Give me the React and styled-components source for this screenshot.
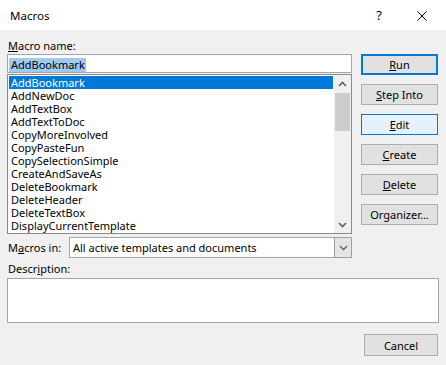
import React from "react";
import styled, { createGlobalStyle, css } from "styled-components";

const Global = createGlobalStyle`
  html, body { margin: 0; padding: 0; background: #f0f0f0; }
  body {
    font-family: "Noto Sans", "Open Sans", sans-serif;
    font-size: 11px;
    color: #000;
  }
  * { box-sizing: border-box; }
`;

const Window = styled.div`
  width: 446px;
  height: 365px;
  display: flex;
  flex-direction: column;
  background: #f0f0f0;
  overflow: hidden;
`;

const TitleBar = styled.div`
  height: 30px;
  flex: none;
  background: #fff;
  display: flex;
  align-items: center;
  padding-left: 10px;
`;

const Title = styled.div`
  flex: 1;
  font-size: 11.5px;
  line-height: 15px;
  padding-top: 1px;
`;

const HelpGlyph = styled.div`
  width: 14px;
  margin-right: 31px;
  font-size: 13px;
  line-height: 15px;
  text-align: center;
`;

const CloseGlyph = styled.svg`
  width: 10px;
  height: 10px;
  margin-right: 19px;
  margin-top: 1px;
`;

const Body = styled.div`
  flex: 1;
  display: flex;
  flex-direction: column;
  padding: 8px 7px 0 7px;
`;

const TopSection = styled.div`
  display: flex;
  gap: 9px;
`;

const LeftColumn = styled.div`
  width: 345px;
  display: flex;
  flex-direction: column;
`;

const FieldLabel = styled.div`
  line-height: 15px;
  height: 15px;
  padding-left: 1px;
  margin-top: ${(p) => p.$top || 0}px;
`;

const Key = styled.span`
  text-decoration: underline;
  text-underline-offset: 1px;
  text-decoration-thickness: 1px;
`;

const NameInput = styled.div`
  margin-top: 1px;
  height: 19px;
  border: 1px solid #a5a5a5;
  background: #fff;
  padding: 2px 0 0 1px;
`;

const SelectedText = styled.span`
  display: inline-block;
  background: #9fc9ee;
  line-height: 14px;
  height: 14px;
  padding: 0 1px 0 2px;
`;

const ListBox = styled.div`
  margin-top: 1px;
  height: 160px;
  border: 1px solid #8a8a8a;
  background: #fff;
  display: flex;
`;

const Items = styled.div`
  flex: 1;
  padding: 1px 1px 0 1px;
`;

const Item = styled.div`
  height: 13px;
  line-height: 13px;
  padding-left: 2px;
  white-space: nowrap;
  ${(p) =>
    p.$selected &&
    css`
      background: #0078d7;
      color: #fff;
    `}
`;

const ScrollBar = styled.div`
  width: 17px;
  background: #f0f0f0;
  display: flex;
  flex-direction: column;
`;

const ScrollArrow = styled.div`
  height: 17px;
  display: flex;
  align-items: center;
  justify-content: center;
`;

const ScrollTrack = styled.div`
  flex: 1;
  padding: 1px 1px;
`;

const ScrollThumb = styled.div`
  height: 38px;
  background: #cdcdcd;
`;

const ButtonColumn = styled.div`
  display: flex;
  flex-direction: column;
  gap: 9px;
  padding-top: 16px;
  width: 77px;
`;

const Button = styled.div`
  height: ${(p) => p.$h || 21}px;
  width: ${(p) => p.$w || 77}px;
  background: #e1e1e1;
  border: 1px solid #adadad;
  display: flex;
  align-items: center;
  justify-content: center;
  line-height: 15px;
  ${(p) =>
    p.$default &&
    css`
      border: 2px solid #0078d7;
    `}
  ${(p) =>
    p.$hover &&
    css`
      background: #e5f1fb;
      border-color: #0078d7;
    `}
`;

const MacrosInRow = styled.div`
  margin-top: 3px;
  height: 21px;
  display: flex;
  align-items: center;
`;

const RowLabel = styled.div`
  width: 62px;
  padding-left: 1px;
  line-height: 15px;
`;

const Combo = styled.div`
  width: 283px;
  height: 21px;
  border: 1px solid #a5a5a5;
  background: #fff;
  display: flex;
`;

const ComboText = styled.div`
  flex: 1;
  padding-left: 3px;
  line-height: 19px;
`;

const ComboButton = styled.div`
  width: 18px;
  margin: -1px -1px -1px 0;
  background: #e5e5e5;
  border: 1px solid #a0a0a0;
  display: flex;
  align-items: center;
  justify-content: center;
`;

const DescriptionBox = styled.div`
  margin-top: 2px;
  width: 432px;
  height: 45px;
  border: 1px solid #a5a5a5;
  background: #fff;
`;

const Footer = styled.div`
  display: flex;
  justify-content: flex-end;
  padding: 11px 1px 0 0;
`;

const Chevron = ({ up, color = "#606060" }) => (
  <svg width="9" height="6" viewBox="0 0 9 6">
    <path
      d={up ? "M1 5 L4.5 1.5 L8 5" : "M1 1 L4.5 4.5 L8 1"}
      fill="none"
      stroke={color}
      strokeWidth="1.6"
    />
  </svg>
);

const macros = [
  "AddBookmark",
  "AddNewDoc",
  "AddTextBox",
  "AddTextToDoc",
  "CopyMoreInvolved",
  "CopyPasteFun",
  "CopySelectionSimple",
  "CreateAndSaveAs",
  "DeleteBookmark",
  "DeleteHeader",
  "DeleteTextBox",
  "DisplayCurrentTemplate",
];

export default function App() {
  return (
    <Window>
      <Global />
      <TitleBar>
        <Title>Macros</Title>
        <HelpGlyph>?</HelpGlyph>
        <CloseGlyph viewBox="0 0 10 10">
          <path d="M0.5 0.5 L9.5 9.5 M9.5 0.5 L0.5 9.5" stroke="#000" strokeWidth="1" />
        </CloseGlyph>
      </TitleBar>
      <Body>
        <TopSection>
          <LeftColumn>
            <FieldLabel>
              <Key>M</Key>acro name:
            </FieldLabel>
            <NameInput>
              <SelectedText>AddBookmark</SelectedText>
            </NameInput>
            <ListBox>
              <Items>
                {macros.map((m, i) => (
                  <Item key={m} $selected={i === 0}>
                    {m}
                  </Item>
                ))}
              </Items>
              <ScrollBar>
                <ScrollArrow>
                  <Chevron up />
                </ScrollArrow>
                <ScrollTrack>
                  <ScrollThumb />
                </ScrollTrack>
                <ScrollArrow>
                  <Chevron />
                </ScrollArrow>
              </ScrollBar>
            </ListBox>
          </LeftColumn>
          <ButtonColumn>
            <Button $default>
              <span>
                <Key>R</Key>un
              </span>
            </Button>
            <Button>
              <span>
                <Key>S</Key>tep Into
              </span>
            </Button>
            <Button $hover>
              <span>
                <Key>E</Key>dit
              </span>
            </Button>
            <Button>
              <span>
                <Key>C</Key>reate
              </span>
            </Button>
            <Button>
              <span>
                <Key>D</Key>elete
              </span>
            </Button>
            <Button>
              <span>
                Or<Key>g</Key>anizer...
              </span>
            </Button>
          </ButtonColumn>
        </TopSection>
        <MacrosInRow>
          <RowLabel>
            M<Key>a</Key>cros in:
          </RowLabel>
          <Combo>
            <ComboText>All active templates and documents</ComboText>
            <ComboButton>
              <Chevron color="#707070" />
            </ComboButton>
          </Combo>
        </MacrosInRow>
        <FieldLabel $top={3}>
          Descr<Key>i</Key>ption:
        </FieldLabel>
        <DescriptionBox />
        <Footer>
          <Button $w={74} $h={22}>
            Cancel
          </Button>
        </Footer>
      </Body>
    </Window>
  );
}
